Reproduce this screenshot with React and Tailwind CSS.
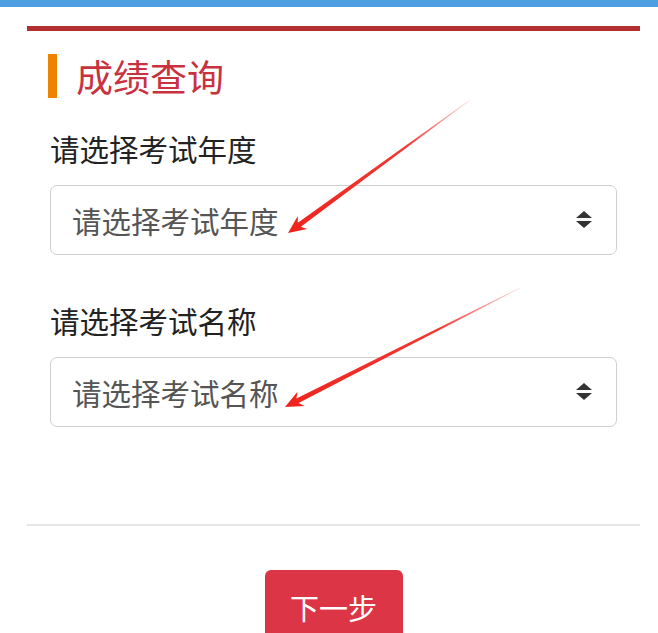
const font = { fontFamily: '"Noto Sans CJK SC", "Noto Sans", sans-serif' };

const SortIcon = () => (
  <svg width="16" height="18" viewBox="0 0 16 18" className="shrink-0">
    <polygon points="8,0 16,7 0,7" fill="#333" />
    <polygon points="0,10 16,10 8,17" fill="#333" />
  </svg>
);

const SelectBox = ({ placeholder }) => (
  <div className="flex items-center justify-between h-[70px] border border-[#cfcfcf] rounded-[7px] pl-[21px] pr-[24px] bg-white">
    <span className="text-[29.5px] leading-[40px] text-[#555]">{placeholder}</span>
    <SortIcon />
  </div>
);

const Arrows = () => (
  <svg className="absolute inset-0 pointer-events-none" width="658" height="633" viewBox="0 0 658 633">
    <defs>
      <linearGradient id="a1" gradientUnits="userSpaceOnUse" x1="470" y1="100" x2="288" y2="233">
        <stop offset="0" stopColor="#f0231c" stopOpacity="0.15" />
        <stop offset="0.35" stopColor="#f0231c" stopOpacity="0.9" />
        <stop offset="1" stopColor="#f0231c" />
      </linearGradient>
      <linearGradient id="a2" gradientUnits="userSpaceOnUse" x1="520" y1="288" x2="285" y2="407">
        <stop offset="0" stopColor="#f0231c" stopOpacity="0.15" />
        <stop offset="0.35" stopColor="#f0231c" stopOpacity="0.9" />
        <stop offset="1" stopColor="#f0231c" />
      </linearGradient>
    </defs>
    <polygon
      fill="url(#a1)"
      points="470.2,100.2 300.8,226.7 307.2,228.9 288,233 297.8,215.9 297.8,222.7 469.8,99.8"
    />
    <polygon
      fill="url(#a2)"
      points="520.2,288.3 298.6,402.9 304.7,406 285,407 297.5,391.8 296.4,398.5 519.8,287.7"
    />
  </svg>
);

export default function App() {
  return (
    <div className="relative w-[658px] h-[633px] overflow-hidden bg-white" style={font}>
      <div className="h-[7px] bg-[#4d9fe1]" />
      <div className="pl-[27px] pr-[18px]">
        <div className="mt-[19px] h-[5px] bg-[#b42f2f]" />

        <div className="px-[23px]">
          <div className="mt-[23px] -ml-[2px] border-l-[9px] border-[#ef8200] pl-[19px] h-[44px] flex items-center">
            <h1 className="text-[37px] leading-[44px] text-[#c8323f]">成绩查询</h1>
          </div>

          <div className="mt-[29px] text-[29.5px] leading-[42px] text-[#222]">请选择考试年度</div>
          <div className="mt-[16px]">
            <SelectBox placeholder="请选择考试年度" />
          </div>

          <div className="mt-[44px] text-[29.5px] leading-[42px] text-[#222]">请选择考试名称</div>
          <div className="mt-[16px]">
            <SelectBox placeholder="请选择考试名称" />
          </div>
        </div>

        <div className="mt-[97px] h-[2px] bg-[#e6e6e6]" />

        <div className="mt-[44px] flex justify-center">
          <button className="w-[138px] pt-[17px] pb-[17px] rounded-[6px] bg-[#dc3545] text-white text-[29px] leading-[40px]">
            下一步
          </button>
        </div>
      </div>
      <Arrows />
    </div>
  );
}
